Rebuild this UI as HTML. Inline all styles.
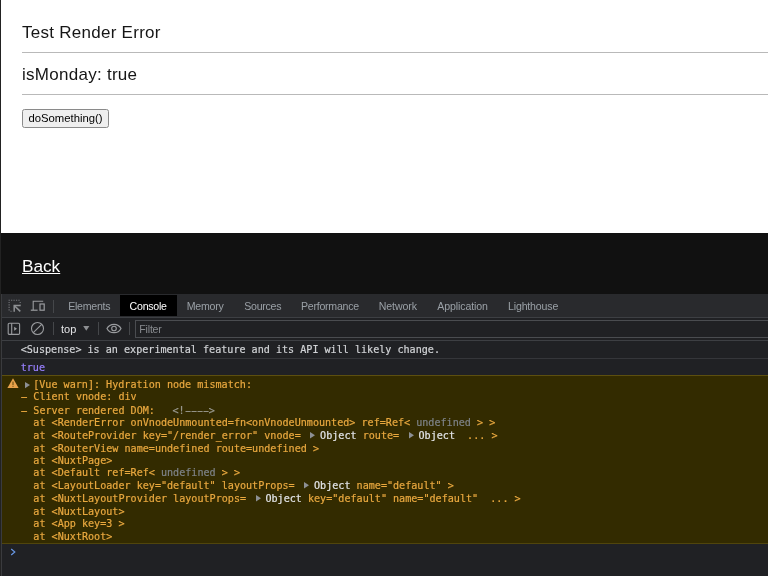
<!DOCTYPE html>
<html lang="en">
<head>
<meta charset="utf-8">
<title>Test Render Error</title>
<style>
html,body{margin:0;padding:0;}
body{width:768px;height:576px;overflow:hidden;position:relative;background:#fff;font-family:"Liberation Sans",sans-serif;color:#111;}
#wrap{position:absolute;left:0;top:0;width:768px;height:576px;will-change:transform;}
#page{position:absolute;left:0;top:0;width:768px;height:294px;background:#fff;}
#lb{position:absolute;left:0;top:0;width:1.2px;height:576px;background:#222;z-index:5;}
#lb2{position:absolute;left:1.2px;top:294px;width:1px;height:282px;background:#3a3b3e;z-index:5;}
.t{position:absolute;left:22px;white-space:nowrap;font-size:17px;letter-spacing:0.27px;line-height:20px;color:#161616;}
.hr{position:absolute;left:22px;right:0;height:1px;background:#b9b9b9;}
#btn{position:absolute;left:22px;top:109.2px;width:87px;height:18.5px;box-sizing:border-box;border:1px solid #8a8a8a;border-radius:2.5px;background:#efefef;font-size:11.3px;line-height:16px;text-align:center;color:#000;font-family:"Liberation Sans",sans-serif;padding:0;}
#foot{position:absolute;left:0;top:233px;width:768px;height:61px;background:#111;}
#foot a{position:absolute;left:22px;top:22.6px;font-size:17.2px;line-height:20px;color:#fff;text-decoration:underline;}
#dt{position:absolute;left:0;top:294px;width:768px;height:282px;background:#202124;font-family:"Liberation Sans",sans-serif;}
#tabs{position:absolute;left:0;top:0;width:768px;height:22.9px;background:#292a2d;border-bottom:1px solid #3d3f43;box-sizing:content-box;}
.tab{position:absolute;top:0;height:24px;line-height:25px;font-size:10.6px;letter-spacing:-0.25px;color:#9aa0a6;white-space:nowrap;}
.tabsel{position:absolute;left:120.2px;top:1.3px;width:57px;height:21px;background:#000;}
.vd{position:absolute;width:1px;background:#45474a;}
#tb{position:absolute;left:0;top:24.5px;width:768px;height:22px;background:#202124;border-bottom:1px solid #3d3f43;box-sizing:border-box;}
.tbt{position:absolute;top:0;line-height:22px;font-size:10.6px;letter-spacing:-0.2px;white-space:nowrap;}
#filter{position:absolute;left:135px;top:1.8px;width:640px;height:17.3px;box-sizing:border-box;border:1px solid #4a4c50;background:#202124;}
#filter span{position:absolute;left:3.3px;top:-0.5px;line-height:17px;font-size:10.6px;letter-spacing:-0.2px;color:#898c90;}
.mono{font-family:"DejaVu Sans Mono","Liberation Mono",monospace;font-size:10.1px;white-space:pre;-webkit-text-stroke:0.2px currentColor;}
.ln{position:absolute;left:0;white-space:pre;line-height:12px;height:12px;}
#con{position:absolute;left:0;top:0;width:768px;height:282px;color:#e8eaed;line-height:12px;}
.sep{position:absolute;left:2px;right:0;height:1px;background:#35363a;}
#warn{position:absolute;left:2px;top:81px;width:766px;height:167px;background:#332b00;border-top:1px solid #5c4f0f;border-bottom:1px solid #50450c;box-sizing:content-box;color:#eaa93f;}
.h{display:inline-block;transform:scaleX(2.1);}
.h2{display:inline-block;transform:scaleX(1.75);}
.u{color:#7e8388;}
.o{color:#e3e5e8;}
.a{display:inline-block;width:13.3px;height:8px;position:relative;}
.a svg{position:absolute;left:3.4px;top:1.2px;}
</style>
</head>
<body>
<div id="wrap">
<div id="page">
  <div class="t" style="top:23px">Test Render Error</div>
  <div class="hr" style="top:52px"></div>
  <div class="t" style="top:65px">isMonday: true</div>
  <div class="hr" style="top:94px"></div>
  <button id="btn">doSomething()</button>
  <div id="foot"><a>Back</a></div>
</div>
<div id="dt">
  <div id="tabs">
    <svg width="14" height="14" viewBox="0 0 14 14" style="position:absolute;left:7.5px;top:5.2px">
      <path d="M0.6 1.3 H12.7 M1.1 2.9 V12.7 M12.2 2.9 V5.4 M2.4 12.2 H5" stroke="#77797d" stroke-width="1.1" stroke-dasharray="1.2 1.25" fill="none"/>
      <path d="M5.5 6.6 H12.7 M6.2 5.9 V12.7" stroke="#8e9093" stroke-width="1.5" fill="none"/>
      <path d="M6.6 7 L12.3 12.4" stroke="#8e9093" stroke-width="1.6" fill="none"/>
    </svg>
    <svg width="16" height="12" viewBox="0 0 16 12" style="position:absolute;left:30px;top:6.3px">
      <path d="M3.2 10 V1.2 H13.2" stroke="#9a9c9f" stroke-width="1.1" fill="none"/>
      <path d="M0.8 10.2 H7.6" stroke="#9a9c9f" stroke-width="1.2" fill="none"/>
      <rect x="10" y="4" width="4.2" height="6.2" stroke="#9a9c9f" stroke-width="1.2" fill="none"/>
    </svg>
    <div class="vd" style="left:53px;top:5.5px;height:13px"></div>
    <div class="tab" style="left:68.2px">Elements</div>
    <div class="tabsel"></div>
    <div class="tab" style="left:129.6px;color:#fff">Console</div>
    <div class="tab" style="left:186.8px">Memory</div>
    <div class="tab" style="left:244.2px">Sources</div>
    <div class="tab" style="left:301px">Performance</div>
    <div class="tab" style="left:378.8px;letter-spacing:-0.12px">Network</div>
    <div class="tab" style="left:437.2px;letter-spacing:-0.1px">Application</div>
    <div class="tab" style="left:508px;letter-spacing:-0.17px">Lighthouse</div>
  </div>
  <div id="tb">
    <svg width="14" height="14" viewBox="0 0 14 14" style="position:absolute;left:7.1px;top:3.4px">
      <rect x="1.2" y="1.2" width="11.4" height="11.2" rx="1.2" stroke="#9a9c9f" stroke-width="1.1" fill="none"/>
      <path d="M4.7 1.2 V12.4" stroke="#9a9c9f" stroke-width="1.1" fill="none"/>
      <path d="M7.2 4.8 L10 6.8 L7.2 8.8 Z" fill="#9a9c9f"/>
    </svg>
    <svg width="15" height="15" viewBox="0 0 15 15" style="position:absolute;left:30.3px;top:2.5px">
      <circle cx="7.5" cy="7.5" r="6" stroke="#9a9c9f" stroke-width="1.1" fill="none"/>
      <path d="M3.3 11.7 L11.7 3.3" stroke="#9a9c9f" stroke-width="1.1" fill="none"/>
    </svg>
    <div class="vd" style="left:53px;top:3.3px;height:13.5px"></div>
    <div class="tbt" style="left:61px;top:-0.9px;font-size:11px;letter-spacing:0;color:#e3e4e6">top</div>
    <svg width="7" height="5" viewBox="0 0 7 5" style="position:absolute;left:83.2px;top:7px"><path d="M0.2 0 H6.4 L3.3 4.8 Z" fill="#8d8f92"/></svg>
    <div class="vd" style="left:98.2px;top:3.3px;height:13.5px"></div>
    <svg width="16" height="11" viewBox="0 0 16 11" style="position:absolute;left:106.2px;top:4.6px">
      <path d="M1 5.5 C3.8 -0.1 12.2 -0.1 15 5.5 C12.2 11.1 3.8 11.1 1 5.5 Z" stroke="#9a9c9f" stroke-width="1.2" fill="none"/>
      <circle cx="8" cy="5.5" r="2.3" stroke="#9a9c9f" stroke-width="1.1" fill="none"/>
    </svg>
    <div class="vd" style="left:129.4px;top:3.3px;height:13.5px"></div>
    <div id="filter"><span>Filter</span></div>
  </div>
  <div id="con" class="mono">
    <div class="sep" style="top:64px"></div>
    <div class="ln" style="left:20.7px;top:50px;color:#d2d4d7">&lt;Suspense&gt; is an experimental feature and its API will likely change.</div>
    <div class="ln" style="left:20.7px;top:68px;color:#9980ff">true</div>
    <div id="warn">
      <svg id="wi" width="12" height="11" viewBox="0 0 12 11" style="position:absolute;left:4.8px;top:2.1px"><path d="M6 0.3 L11.6 10 L0.4 10 Z" fill="#e8a24c"/><rect x="5.55" y="3.6" width="0.9" height="3.4" fill="#4a3a08"/><rect x="5.55" y="7.8" width="0.9" height="1" fill="#4a3a08"/></svg>
      <svg width="6" height="7" viewBox="0 0 6 7" style="position:absolute;left:22.7px;top:5.8px"><path d="M0 0 L5 3.1 L0 6.2 Z" fill="#8d9094"/></svg>
      <div class="ln" style="left:31.2px;top:3px">[Vue warn]: Hydration node mismatch:</div>
      <div class="ln" style="left:19.2px;top:15px"><span class="h">-</span> Client vnode: div</div>
      <div class="ln" style="left:19.2px;top:29px"><span class="h">-</span> Server rendered DOM:</div>
      <div class="ln" style="left:170.4px;top:29px;color:#9a9a8f">&lt;!<span class="h2">-</span><span class="h2">-</span><span class="h2">-</span><span class="h2">-</span>&gt;</div>
      <div class="ln" style="left:19.2px;top:41px">  at &lt;RenderError onVnodeUnmounted=fn&lt;onVnodeUnmounted&gt; ref=Ref&lt; <span class="u">undefined</span> &gt; &gt;</div>
      <div class="ln" style="left:19.2px;top:54px">  at &lt;RouteProvider key="/render_error" vnode= <span class="a"><svg width="6" height="7" viewBox="0 0 6 7"><path d="M0 0 L5 3.2 L0 6.4 Z" fill="#8d9094"/></svg></span><span class="o">Object</span> route= <span class="a"><svg width="6" height="7" viewBox="0 0 6 7"><path d="M0 0 L5 3.2 L0 6.4 Z" fill="#8d9094"/></svg></span><span class="o">Object</span>  ... &gt;</div>
      <div class="ln" style="left:19.2px;top:67px">  at &lt;RouterView name=undefined route=undefined &gt;</div>
      <div class="ln" style="left:19.2px;top:79px">  at &lt;NuxtPage&gt;</div>
      <div class="ln" style="left:19.2px;top:91px">  at &lt;Default ref=Ref&lt; <span class="u">undefined</span> &gt; &gt;</div>
      <div class="ln" style="left:19.2px;top:104px">  at &lt;LayoutLoader key="default" layoutProps= <span class="a"><svg width="6" height="7" viewBox="0 0 6 7"><path d="M0 0 L5 3.2 L0 6.4 Z" fill="#8d9094"/></svg></span><span class="o">Object</span> name="default" &gt;</div>
      <div class="ln" style="left:19.2px;top:117px">  at &lt;NuxtLayoutProvider layoutProps= <span class="a"><svg width="6" height="7" viewBox="0 0 6 7"><path d="M0 0 L5 3.2 L0 6.4 Z" fill="#8d9094"/></svg></span><span class="o">Object</span> key="default" name="default"  ... &gt;</div>
      <div class="ln" style="left:19.2px;top:130px">  at &lt;NuxtLayout&gt;</div>
      <div class="ln" style="left:19.2px;top:142px">  at &lt;App key=3 &gt;</div>
      <div class="ln" style="left:19.2px;top:155px">  at &lt;NuxtRoot&gt;</div>
    </div>
    <svg width="6" height="8" viewBox="0 0 6 8" style="position:absolute;left:10px;top:254.1px"><path d="M1.2 1 L4.8 4 L1.2 7" fill="none" stroke="#6796e2" stroke-width="1.2"/></svg>
  </div>
</div>
<div id="lb"></div><div id="lb2"></div>
</div>
</body>
</html>
